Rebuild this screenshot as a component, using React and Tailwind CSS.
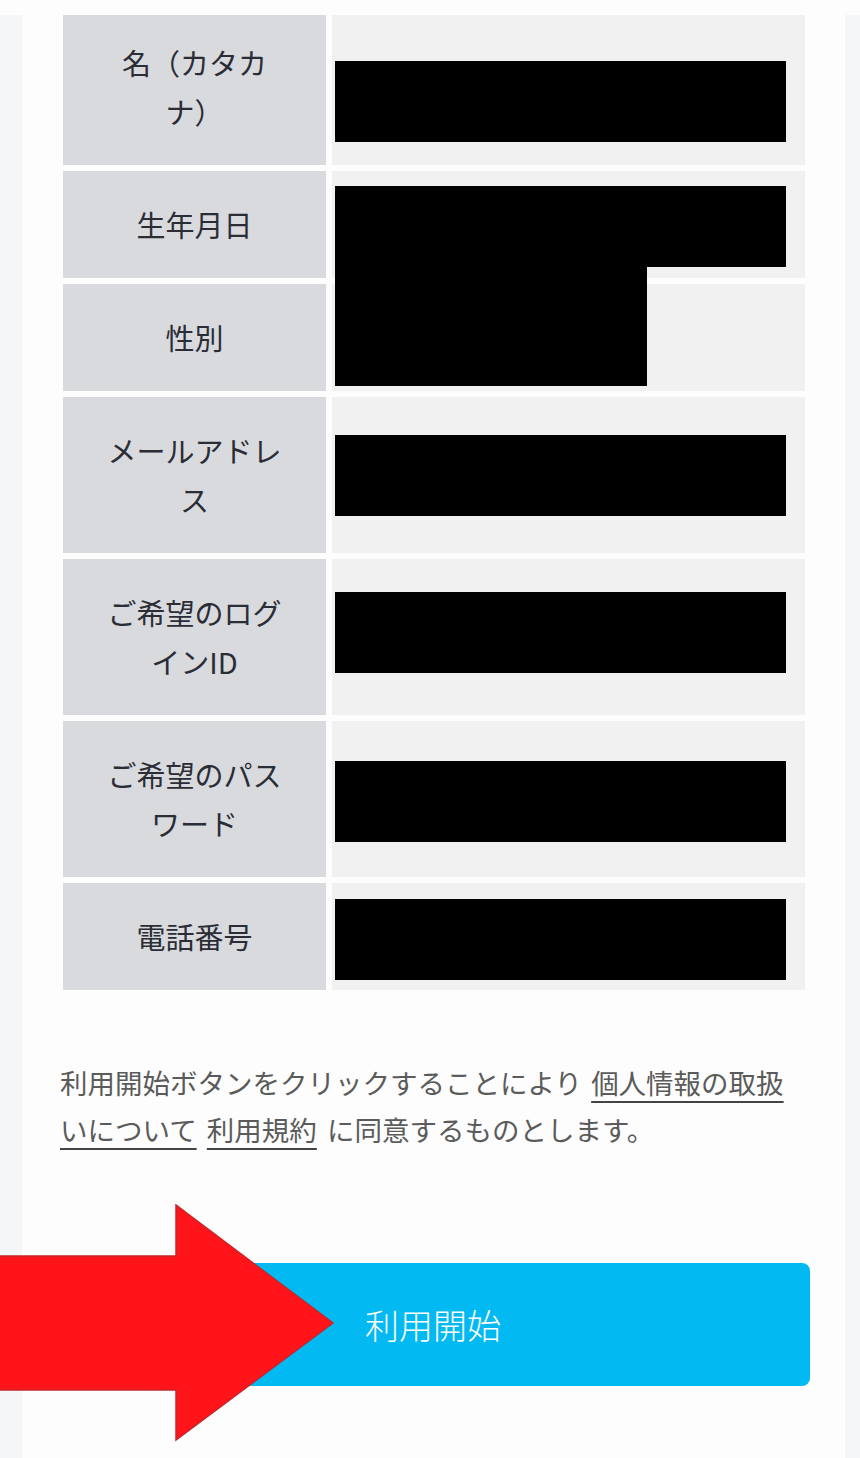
import React from "react";

const rows = [
  { label: "名（カタカナ）", cell: "pt-[23px] pb-[29px]", box: "mt-[46px]" },
  { label: "生年月日", cell: "py-[29px]", box: "mt-[15px]", tall: true },
  { label: "性別", cell: "py-[29px]", box: null },
  { label: "メールアドレス", cell: "py-[29px]", box: "mt-[38px]" },
  { label: "ご希望のログインID", cell: "py-[29px]", box: "mt-[33px]" },
  { label: "ご希望のパスワード", cell: "py-[29px]", box: "mt-[40px]" },
  { label: "電話番号", cell: "py-[29px]", box: "mt-[16px]" },
];

const font = { fontFamily: '"Noto Sans CJK JP", "Noto Sans", sans-serif' };

const Row = ({ label, cell, box, tall }) => (
  <>
    <div
      className={`bg-[#d9dadd] px-[40px] text-center text-[29px] leading-[49px] text-[#2b2d36] ${cell}`}
    >
      {label}
    </div>
    <div className="relative bg-[#f1f1f1] pl-[3px]">
      {box && <div className={`h-[81px] w-[451px] bg-black ${box}`} />}
      {/* redaction runs down over the next row */}
      {tall && (
        <div className="absolute left-[3px] top-[95px] z-10 h-[120px] w-[312px] bg-black" />
      )}
    </div>
  </>
);

const App = () => {
  return (
    <div
      className="relative h-[1458px] w-[860px] overflow-hidden bg-[#f5f6f8]"
      style={font}
    >
      <div className="h-[15px] bg-[#fdfdfd]" />
      <div className="ml-[22px] h-[1443px] w-[823px] bg-[#fdfdfd]">
        <div className="ml-[41px] grid w-[742px] grid-cols-[263px_473px] gap-[6px]">
          {rows.map((r) => (
            <Row key={r.label} {...r} />
          ))}
        </div>

        <p className="ml-[38px] mt-[69px] w-[730px] text-[27.5px] leading-[47px] text-[#5b5b5b]">
          利用開始ボタンをクリックすることにより{" "}
          <a href="#" className="ml-[3px] underline decoration-[#444] underline-offset-[7px]">
            個人情報の取扱いについて
          </a>{" "}
          <a href="#" className="mx-[4px] underline decoration-[#444] underline-offset-[7px]">
            利用規約
          </a>{" "}
          に同意するものとします。
        </p>

        <div className="ml-[34px] mt-[110px] flex h-[123px] w-[754px] items-center justify-center rounded-[8px] bg-[#02b9f2] text-[34px] font-light text-white">
          利用開始
        </div>
      </div>

      {/* red arrow pointing at the button */}
      <svg
        className="absolute left-0 top-[1204px] z-20"
        width="336"
        height="238"
        viewBox="0 0 336 238"
      >
        <polygon
          points="-2,52 176,52 176,1 333,119 176,236 176,186 -2,186"
          fill="#ff1419"
          stroke="#c4262b"
          strokeWidth="1.5"
        />
      </svg>
    </div>
  );
};

export default App;
